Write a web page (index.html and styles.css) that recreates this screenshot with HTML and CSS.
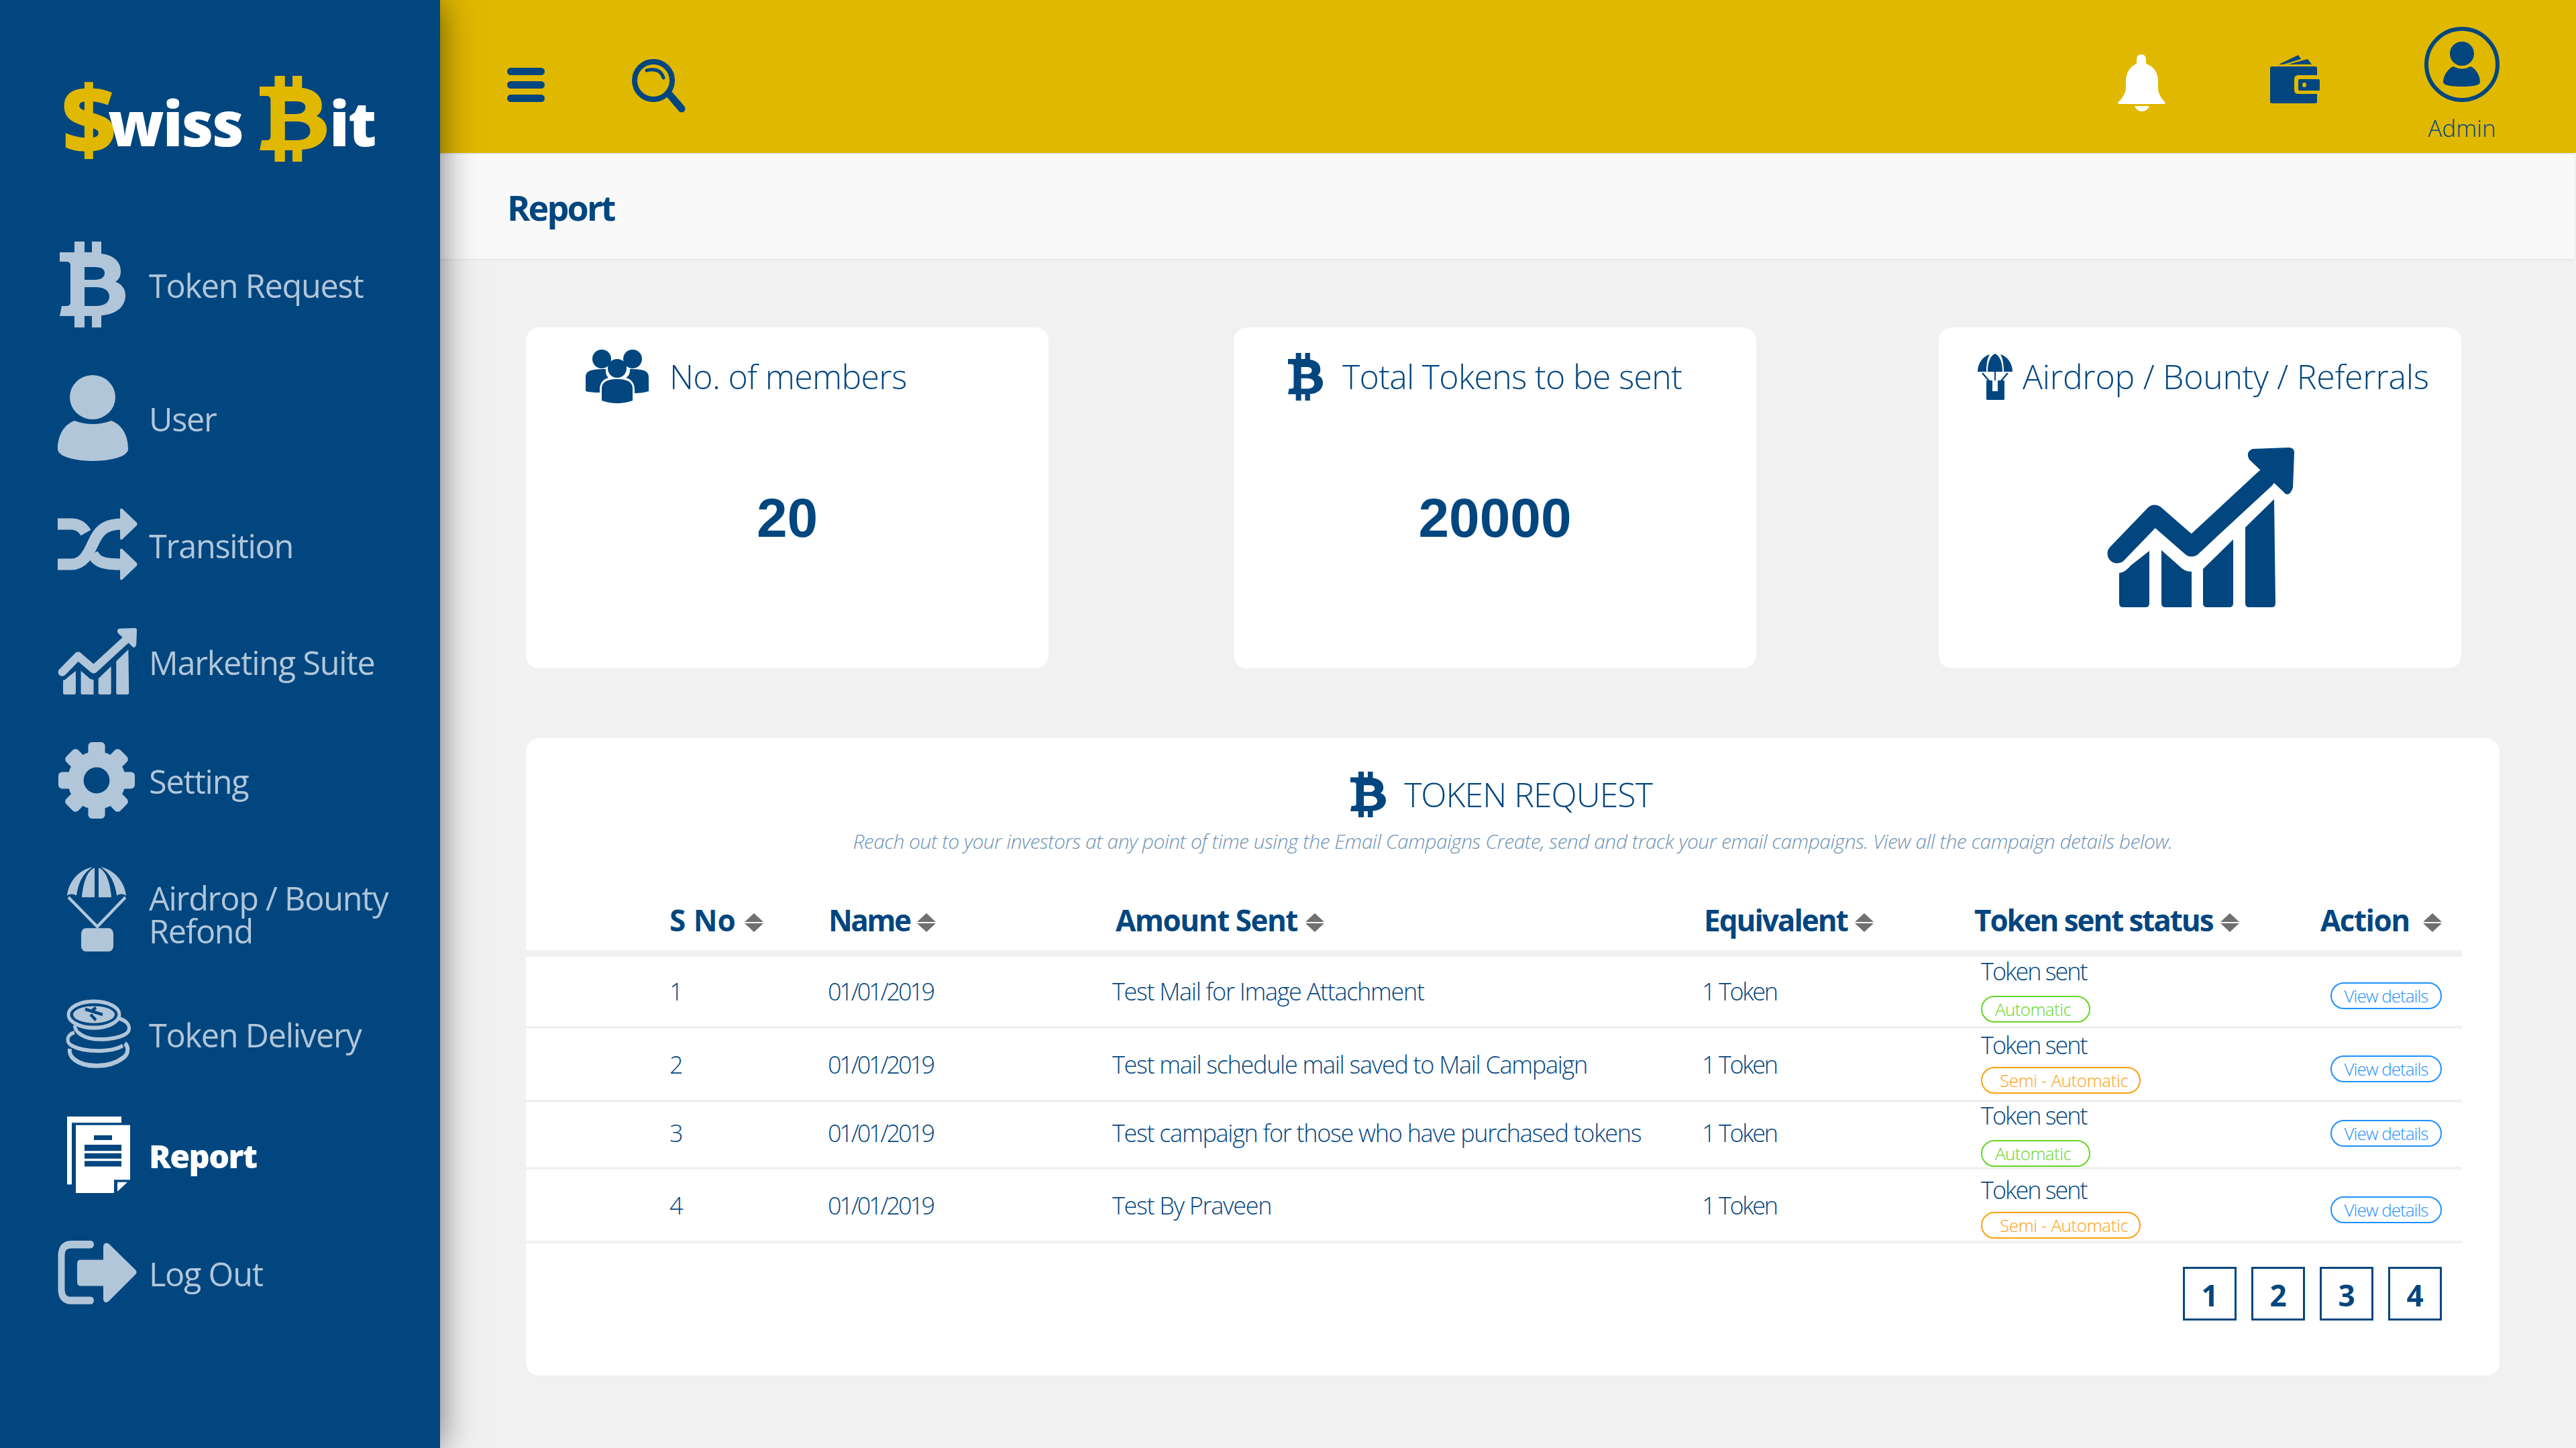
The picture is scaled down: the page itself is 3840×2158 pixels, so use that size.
FILE: index.html
```html
<!DOCTYPE html>
<html lang="en">
<head>
  <meta charset="UTF-8">
  <meta name="viewport" content="width=device-width, initial-scale=1.0">
  <title>Report</title>
  <link rel="stylesheet" href="styles.css">
</head>
<body>

  <!-- shared icons -->
  <svg class="defs" width="0" height="0">
    <symbol id="i-btc" viewBox="0 0 98 128" preserveAspectRatio="none">
      <path fill-rule="evenodd" d="M22 0h15v16h11V0h14v18C80 20 91 30 91 44C91 52 88 57 83 60C92 63 98 70 98 80C98 97 84 109 62 110V128H48V111H37V128H22V111H0L3 96H10C14 96 16 94 16 90V36C16 32 14 30 10 30H0V16H22ZM37 38V57H52C62 57 67 53 67 47C67 41 62 38 52 38ZM37 68V96H54C66 96 74 91 74 82C74 73 66 68 54 68Z"/>
    </symbol>
    <symbol id="i-trend" viewBox="0 0 280 238" preserveAspectRatio="none">
      <path d="M16 158L72 100L127 148L237 46" fill="none" stroke="currentColor" stroke-width="29" stroke-linecap="round" stroke-linejoin="round"/>
      <path d="M218 2L272 0Q280 0 280 8L278 60Q272 76 264 66L213 18Q207 6 218 2Z"/>
      <path d="M19 187Q28 186 36 176L64 154V232Q64 238 58 238H25Q19 238 19 232Z"/>
      <path d="M82 153L108 176Q116 185 127 185V238H88Q82 238 82 232Z"/>
      <path d="M144 181L189 137V232Q189 238 183 238H150Q144 238 144 232Z"/>
      <path d="M207 119L250 77L252 232Q252 238 246 238H213Q207 238 207 232Z"/>
    </symbol>
  </svg>

  <aside class="sidebar">
    <div class="logo">
      <span class="logo-mark">$</span><span class="logo-word">wiss</span>
      <svg class="logo-btc" width="100" height="128"><use href="#i-btc"/></svg><span>it</span>
    </div>

    <nav class="nav">
      <a class="nav-item">
        <svg class="nav-icon" width="136" height="128" viewBox="0 0 136 128"><use href="#i-btc" x="3" width="98" height="128"/></svg>
        <span>Token Request</span>
      </a>
      <a class="nav-item">
        <svg class="nav-icon" width="136" height="128" viewBox="0 0 136 128">
          <ellipse cx="52" cy="33" rx="34" ry="33"/>
          <path d="M25 68Q52 78 80 68C96 74 105 90 105 110C105 124 70 128 52 128C35 128 0 124 0 110C0 90 9 74 25 68Z"/>
        </svg>
        <span>User</span>
      </a>
      <a class="nav-item">
        <svg class="nav-icon" width="136" height="107" viewBox="0 0 136 107">
          <path d="M0 83H20C42 83 48 60 56 45C64 30 74 23 96 23" fill="none" stroke="currentColor" stroke-width="17"/>
          <path d="M0 23H20C30 23 37 27 42 36M52 67C58 80 68 83 96 83" fill="none" stroke="currentColor" stroke-width="17"/>
          <path d="M93 1Q94 -1 96 0L118 21Q119 23 118 25L96 46Q94 47 93 45Z"/>
          <path d="M93 61Q94 59 96 60L118 81Q119 83 118 85L96 106Q94 107 93 105Z"/>
        </svg>
        <span>Transition</span>
      </a>
      <a class="nav-item">
        <svg class="nav-icon" width="136" height="99" viewBox="0 0 136 99"><use href="#i-trend" width="118" height="99"/></svg>
        <span>Marketing Suite</span>
      </a>
      <a class="nav-item">
        <svg class="nav-icon" width="136" height="114" viewBox="0 0 136 114">
          <g transform="translate(1 0) scale(1.14)">
            <circle cx="50" cy="50" r="38"/>
            <rect x="39" y="0" width="22" height="20" rx="5"/>
            <rect x="39" y="0" width="22" height="20" rx="5" transform="rotate(45 50 50)"/>
            <rect x="39" y="0" width="22" height="20" rx="5" transform="rotate(90 50 50)"/>
            <rect x="39" y="0" width="22" height="20" rx="5" transform="rotate(135 50 50)"/>
            <rect x="39" y="0" width="22" height="20" rx="5" transform="rotate(180 50 50)"/>
            <rect x="39" y="0" width="22" height="20" rx="5" transform="rotate(225 50 50)"/>
            <rect x="39" y="0" width="22" height="20" rx="5" transform="rotate(270 50 50)"/>
            <rect x="39" y="0" width="22" height="20" rx="5" transform="rotate(315 50 50)"/>
            <circle class="gear-hole" cx="50" cy="50" r="17"/>
          </g>
        </svg>
        <span>Setting</span>
      </a>
      <a class="nav-item">
        <svg class="nav-icon" width="136" height="127" viewBox="0 0 136 110" preserveAspectRatio="none">
          <g transform="translate(14 0)">
            <path d="M0 38C2 20 18 4 38 1C24 8 16 22 14 38Q7 34 0 38Z"/>
            <path d="M22 40C24 20 30 6 41 2V40Z"/>
            <path d="M47 2C58 6 64 20 66 40H47Z"/>
            <path d="M88 38C86 20 70 4 50 1C64 8 72 22 74 38Q81 34 88 38Z"/>
            <path d="M2 40L45 78L87 40" fill="none" stroke="currentColor" stroke-width="4"/>
            <rect x="21" y="80" width="48" height="30" rx="7"/>
          </g>
        </svg>
        <span class="nav-two-line">Airdrop / Bounty<br>Refond</span>
      </a>
      <a class="nav-item">
        <svg class="nav-icon" width="136" height="104" viewBox="0 0 136 90" preserveAspectRatio="none">
          <g transform="translate(13 0)">
            <ellipse cx="41" cy="20" rx="38" ry="17" fill="none" stroke="currentColor" stroke-width="5"/>
            <ellipse cx="41" cy="20" rx="31" ry="11"/>
            <path class="coin-mark" d="M28 13L54 20M36 20L44 27M44 11L38 15" fill="none" stroke-width="4"/>
            <path d="M78 25C92 28 96 36 92 42C84 52 40 56 22 46C16 43 13 39 12 34" fill="none" stroke="currentColor" stroke-width="5"/>
            <path d="M12 43C0 46 -1 56 8 60C30 70 70 68 84 60" fill="none" stroke="currentColor" stroke-width="5"/>
            <path d="M87 57C94 62 92 72 84 76C64 89 28 89 12 78C6 74 4 70 5 64" fill="none" stroke="currentColor" stroke-width="6"/>
          </g>
        </svg>
        <span>Token Delivery</span>
      </a>
      <a class="nav-item active">
        <svg class="nav-icon" width="136" height="114" viewBox="0 0 136 98" preserveAspectRatio="none">
          <g transform="translate(14 0)">
            <path d="M0 0H81V8H7V87H0Z"/>
            <path fill-rule="evenodd" d="M13 11H94V81H70V98H13ZM40 24V30H67V24ZM26 36V44H81V36ZM26 47V54H81V47ZM26 57V64H81V57Z"/>
            <path d="M75 84H90L75 96Z"/>
          </g>
        </svg>
        <span>Report</span>
      </a>
      <a class="nav-item">
        <svg class="nav-icon" width="136" height="96" viewBox="0 0 136 84" preserveAspectRatio="none">
          <path d="M49 5H20Q5.5 5 5.5 20V63Q5.5 78 20 78H49" fill="none" stroke="currentColor" stroke-width="10" stroke-linecap="round"/>
          <path d="M34 25H68V7Q70 1 76 4L116 38Q119 41 116 44L76 79Q70 83 68 77V59H34Q29 59 29 54V30Q29 25 34 25Z"/>
        </svg>
        <span>Log Out</span>
      </a>
    </nav>
  </aside>

  <main class="main">
    <header class="topbar">
      <svg class="tb-menu" width="56" height="51" viewBox="0 0 56 51">
        <rect width="56" height="11" rx="5.5"/>
        <rect y="20" width="56" height="11" rx="5.5"/>
        <rect y="40" width="56" height="11" rx="5.5"/>
      </svg>
      <svg class="tb-search" width="80" height="80" viewBox="0 0 80 80">
        <circle cx="32" cy="32" r="28" fill="none" stroke="currentColor" stroke-width="8"/>
        <path d="M57 54L74 74" fill="none" stroke="currentColor" stroke-width="11" stroke-linecap="round"/>
        <path d="M22 17Q42 12 47 28" fill="none" stroke="currentColor" stroke-width="5" stroke-linecap="round"/>
      </svg>
      <div class="tb-right">
        <svg class="tb-bell" width="71" height="85" viewBox="0 0 71 85">
          <path d="M35 0C30 0 28 4 28 8V14C18 18 12 28 12 40V50C12 60 4 68 0 72Q0 74 2 74H69Q71 74 71 72C67 68 60 60 60 50V40C60 28 54 18 42 14V8C42 4 40 0 35 0Z"/>
          <path d="M25 77H47C45 82 41 85 36 85C31 85 27 82 25 77Z"/>
        </svg>
        <svg class="tb-wallet" width="74" height="72" viewBox="0 0 74 72">
          <path d="M13 14L42 0L46 6L20 14Z"/>
          <path d="M27 14L56 6L62 14Z"/>
          <path d="M3 17H67Q70 17 70 20V30H42Q36 30 36 36V52Q36 58 42 58H70V69Q70 72 67 72H3Q0 72 0 69V20Q0 17 3 17Z"/>
          <path fill-rule="evenodd" d="M44 36H72Q74 36 74 38V51Q74 53 72 53H44Q42 53 42 51V38Q42 36 44 36ZM51 41Q48 41 48 44.500Q48 48 51 48Q54 48 54 44.500Q54 41 51 41Z"/>
        </svg>
        <div class="profile">
          <svg width="112" height="112" viewBox="0 0 112 112">
            <circle cx="56" cy="56" r="53" fill="none" stroke="currentColor" stroke-width="6"/>
            <ellipse cx="56" cy="40" rx="18" ry="18"/>
            <path d="M43 59Q56 66 69 59C78 63 83 74 83 82C83 88 70 89 56 89C42 89 28 88 28 82C28 74 34 63 43 59Z"/>
          </svg>
          <span>Admin</span>
        </div>
      </div>
    </header>

    <div class="subheader">Report</div>

    <div class="content">
      <section class="cards">
        <div class="card card-members">
          <div class="card-title">
            <svg width="94" height="80" viewBox="0 0 94 80">
              <ellipse cx="24" cy="14" rx="14" ry="14"/>
              <ellipse cx="70" cy="14" rx="14" ry="14"/>
              <path d="M0 62V42C0 32 6 29 30 29C30 34 30 38 34 42C26 44 21 50 21 60V64Q8 64 0 62Z"/>
              <path d="M94 62V42C94 32 88 29 66 29C66 34 66 38 60 42C68 44 73 50 73 60V65Q86 65 94 62Z"/>
              <ellipse cx="47" cy="28" rx="14" ry="14"/>
              <path d="M24 76V58C24 50 30 44 47 44C64 44 70 50 70 58V76Q47 84 24 76Z"/>
            </svg>
            <span>No. of members</span>
          </div>
          <div class="card-value">20</div>
        </div>

        <div class="card card-tokens">
          <div class="card-title">
            <svg class="card-btc" width="52" height="71"><use href="#i-btc"/></svg>
            <span>Total Tokens to be sent</span>
          </div>
          <div class="card-value">20000</div>
        </div>

        <div class="card card-airdrop">
          <div class="card-title">
            <svg width="52" height="69" viewBox="0 0 52 69">
              <path d="M0 27C0 16 6 5 18 1C14 8 13 18 13 27Z"/>
              <path d="M15 27C15 14 18 4 26 0C34 4 37 14 37 27H27V40H25V27Z"/>
              <path d="M52 27C52 16 46 5 34 1C38 8 39 18 39 27Z"/>
              <path d="M7 29L20 44M45 29L32 44" fill="none" stroke="currentColor" stroke-width="2.500"/>
              <path d="M13 40H22V56H30V40H40V68Q40 69 38 69H15Q13 69 13 68Z"/>
            </svg>
            <span>Airdrop / Bounty / Referrals</span>
          </div>
          <svg class="card-trend" width="280" height="238"><use href="#i-trend"/></svg>
        </div>
      </section>

      <section class="panel">
        <div class="panel-head">
          <svg width="53" height="68"><use href="#i-btc"/></svg>
          <h2>TOKEN REQUEST</h2>
        </div>
        <p class="panel-sub">Reach out to your investors at any point of time using the Email Campaigns Create, send and track your email campaigns. View all the campaign details below.</p>

        <table class="report-table">
          <colgroup>
            <col class="c1"><col class="c2"><col class="c3"><col class="c4"><col class="c5"><col class="c6">
          </colgroup>
          <thead>
            <tr>
              <th>S No <svg class="sort" width="28" height="28" viewBox="0 0 28 28"><path d="M14 0L28 13H0ZM0 15H28L14 28Z"/></svg></th>
              <th>Name <svg class="sort" width="28" height="28" viewBox="0 0 28 28"><path d="M14 0L28 13H0ZM0 15H28L14 28Z"/></svg></th>
              <th>Amount Sent <svg class="sort" width="28" height="28" viewBox="0 0 28 28"><path d="M14 0L28 13H0ZM0 15H28L14 28Z"/></svg></th>
              <th>Equivalent <svg class="sort" width="28" height="28" viewBox="0 0 28 28"><path d="M14 0L28 13H0ZM0 15H28L14 28Z"/></svg></th>
              <th>Token sent status <svg class="sort" width="28" height="28" viewBox="0 0 28 28"><path d="M14 0L28 13H0ZM0 15H28L14 28Z"/></svg></th>
              <th>Action <svg class="sort sort-far" width="28" height="28" viewBox="0 0 28 28"><path d="M14 0L28 13H0ZM0 15H28L14 28Z"/></svg></th>
            </tr>
          </thead>
          <tbody>
            <tr class="row-1">
              <td>1</td>
              <td class="date">01/01/2019</td>
              <td>Test Mail for Image Attachment</td>
              <td class="amount">1 Token</td>
              <td class="status"><div>Token sent</div><span class="badge auto">Automatic</span></td>
              <td class="action"><a class="view-btn">View details</a></td>
            </tr>
            <tr class="row-2">
              <td>2</td>
              <td class="date">01/01/2019</td>
              <td>Test mail schedule mail saved to Mail Campaign</td>
              <td class="amount">1 Token</td>
              <td class="status"><div>Token sent</div><span class="badge semi">Semi - Automatic</span></td>
              <td class="action"><a class="view-btn">View details</a></td>
            </tr>
            <tr class="row-3">
              <td>3</td>
              <td class="date">01/01/2019</td>
              <td>Test campaign for those who have purchased tokens</td>
              <td class="amount">1 Token</td>
              <td class="status"><div>Token sent</div><span class="badge auto">Automatic</span></td>
              <td class="action"><a class="view-btn">View details</a></td>
            </tr>
            <tr class="row-4">
              <td>4</td>
              <td class="date">01/01/2019</td>
              <td>Test By Praveen</td>
              <td class="amount">1 Token</td>
              <td class="status"><div>Token sent</div><span class="badge semi">Semi - Automatic</span></td>
              <td class="action"><a class="view-btn">View details</a></td>
            </tr>
          </tbody>
        </table>

        <div class="pager">
          <a>1</a><a>2</a><a>3</a><a>4</a>
        </div>
      </section>
    </div>
  </main>

</body>
</html>
```

FILE: styles.css
```css
* {
  box-sizing: border-box;
}
html, body {
  margin: 0;
  height: 2158px;
  overflow: hidden;
}
body {
  display: flex;
  background: #f1f1f1;
  color: #02467f;
  font-family: "Open Sans", "Noto Sans", sans-serif;
}
svg {
  fill: currentColor;
  display: block;
  flex: none;
}
.defs {
  position: absolute;
}

/* sidebar */
.sidebar {
  width: 656px;
  flex: none;
  height: 2158px;
  background: #02467f;
  box-shadow: 0 0 50px rgba(0, 0, 0, 0.55);
  position: relative;
  z-index: 2;
  padding: 113px 0 0 86px;
}
.logo {
  display: flex;
  height: 128px;
  margin-left: 6px;
  color: #fff;
  font-size: 92px;
  font-weight: 800;
  line-height: 140px;
  letter-spacing: -2px;
}
.logo-mark {
  color: #e0b800;
  font-size: 140px;
  width: 69px;
  letter-spacing: 0;
  line-height: 124px;
}
.logo-word {
  width: 197px;
}
.logo-btc {
  color: #e0b800;
  margin: 0 4px 0 29px;
}
.nav {
  display: flex;
  flex-direction: column;
  gap: 71px;
  margin-top: 119px;
}
.nav-item {
  display: flex;
  align-items: center;
  color: #b2c6d9;
  font-size: 48.500px;
  letter-spacing: -1.200px;
}
.nav-item span {
  margin-top: 2px;
}
.nav-icon {
  color: #b2c6d9;
}
.gear-hole {
  fill: #02467f;
}
.coin-mark {
  stroke: #02467f;
}
.nav-item .nav-two-line {
  margin-top: 16px;
  line-height: 49px;
}
.nav-item.active {
  color: #fff;
  font-weight: 800;
  letter-spacing: -1.600px;
}
.nav-item.active .nav-icon {
  color: #fff;
}

/* top bar */
.main {
  flex: 1;
  min-width: 0;
}
.topbar {
  display: flex;
  height: 228px;
  padding: 40px 114px 0 100px;
  background: #e0b800;
}
.tb-menu {
  margin-top: 61px;
}
.tb-search {
  margin: 48px 0 0 130px;
}
.tb-right {
  display: flex;
  margin-left: auto;
  gap: 156px;
}
.tb-bell {
  margin-top: 41px;
  color: #fff;
}
.tb-wallet {
  margin-top: 42px;
}
.profile {
  width: 112px;
  display: flex;
  flex-direction: column;
  align-items: center;
  font-size: 35px;
  font-weight: 300;
  line-height: 50px;
}
.profile span {
  margin-top: 14px;
}

.subheader {
  height: 160px;
  margin-right: 3px;
  padding-left: 100px;
  background: #f9f9f9;
  border-top: 2px solid #e8e8e8;
  border-bottom: 2px solid #e8e8e8;
  font-size: 52px;
  font-weight: 700;
  line-height: 158px;
  letter-spacing: -2.800px;
}

.content {
  padding: 100px 0 0 128px;
}

/* stat cards */
.cards {
  display: flex;
  width: 2885px;
}
.card {
  width: 779px;
  height: 508px;
  padding-top: 35px;
  background: #fff;
  border-radius: 20px;
}
.card-title {
  display: flex;
  align-items: center;
  height: 76px;
  font-size: 50px;
  font-weight: 300;
  letter-spacing: -0.700px;
}
.card-tokens {
  margin: 0 272px 0 276px;
}
.card-members .card-title {
  padding-left: 89px;
  gap: 31px;
}
.card-tokens .card-title {
  padding-left: 81px;
  gap: 29px;
}
.card-airdrop .card-title {
  padding-left: 58px;
  gap: 15px;
  letter-spacing: -0.300px;
}
.card-value {
  margin-top: 122px;
  text-align: center;
  font-family: "Liberation Sans", Arial, sans-serif;
  font-size: 82px;
  font-weight: 700;
  line-height: 102px;
}
.card-trend {
  margin: 68px auto 0;
}

/* table panel */
.panel {
  width: 2942px;
  height: 950px;
  margin-top: 104px;
  padding-top: 50px;
  background: #fff;
  border-radius: 20px;
}
.panel-head {
  display: flex;
  justify-content: center;
  align-items: center;
  gap: 27px;
  padding-right: 34px;
  height: 68px;
}
.panel-head h2 {
  margin: 0;
  font-size: 50px;
  font-weight: 300;
  letter-spacing: -1px;
}
.panel-sub {
  margin: 16px 0 0;
  text-align: center;
  font-size: 30px;
  font-style: italic;
  font-weight: 300;
  line-height: 40px;
  letter-spacing: -0.500px;
  color: #6f93b4;
}
.report-table {
  width: 2886px;
  margin-top: 52px;
  table-layout: fixed;
  border-collapse: separate;
  border-spacing: 0;
}
.c1 { width: 450px; }
.c2 { width: 424px; }
.c3 { width: 879px; }
.c4 { width: 406px; }
.c5 { width: 513px; }
.c6 { width: 214px; }

.report-table th {
  height: 100px;
  padding: 0 0 0 3px;
  border-bottom: 10px solid #f1f1f1;
  font-size: 44px;
  font-weight: 700;
  letter-spacing: -1.500px;
  text-align: left;
  white-space: nowrap;
}
.report-table th:first-child {
  padding-left: 214px;
  letter-spacing: 0;
}
.report-table th:nth-child(2) {
  padding-left: 1px;
  letter-spacing: -2.500px;
}
.report-table th:nth-child(3) {
  padding-left: 5px;
}
.report-table th:nth-child(4) {
  letter-spacing: -2px;
}
.report-table th:nth-child(5) {
  padding-left: 0;
  letter-spacing: -2.100px;
}
.sort {
  display: inline-block;
  vertical-align: -1px;
  margin-left: 2px;
  fill: #707070;
}
.sort-far {
  margin-left: 10px;
}
.report-table td {
  padding: 0;
  border-bottom: 4px solid #f1f1f1;
  font-size: 36px;
  font-weight: 300;
  letter-spacing: -1.300px;
  white-space: nowrap;
}
.report-table td:first-child {
  padding-left: 214px;
}
.report-table td.date {
  letter-spacing: -3.200px;
}
.report-table td.amount {
  letter-spacing: -2.400px;
}
.row-1 td { height: 107px; }
.row-2 td { height: 110px; }
.row-3 td { height: 100px; }
.row-4 td { height: 110px; }
.report-table .row-3 td:not(.status):not(.action) {
  padding-bottom: 6px;
}

.report-table td.status {
  padding-left: 10px;
  vertical-align: top;
  line-height: 38px;
  letter-spacing: -2px;
}
.row-1 .status { padding-top: 3px; }
.row-2 .status { padding-top: 6px; }
.row-3 .status { padding-top: 1px; }
.row-4 .status { padding-top: 12px; }

.badge {
  display: inline-block;
  height: 40px;
  border: 2px solid;
  border-radius: 20px;
  font-size: 26px;
  line-height: 36px;
}
.badge.auto {
  margin-top: 17px;
  padding: 0 27px 0 19px;
  color: #66d524;
  letter-spacing: -0.600px;
}
.badge.semi {
  margin-top: 13px;
  padding: 0 17px 0 26px;
  color: #ff9e0f;
  letter-spacing: -0.400px;
}
.report-table td.action {
  padding-left: 18px;
}
.view-btn {
  display: block;
  width: 166px;
  height: 40px;
  margin-top: 13px;
  border: 2px solid #1e90ff;
  border-radius: 20px;
  color: #1e90ff;
  font-size: 26px;
  line-height: 36px;
  letter-spacing: -1px;
  text-align: center;
}
.row-3 .view-btn {
  margin-top: -4px;
}

.pager {
  display: flex;
  justify-content: flex-end;
  gap: 22px;
  margin-top: 35px;
  padding-right: 86px;
}
.pager a {
  width: 80px;
  height: 80px;
  border: 3px solid #02467f;
  font-size: 44px;
  font-weight: 700;
  line-height: 78px;
  text-align: center;
}
```
